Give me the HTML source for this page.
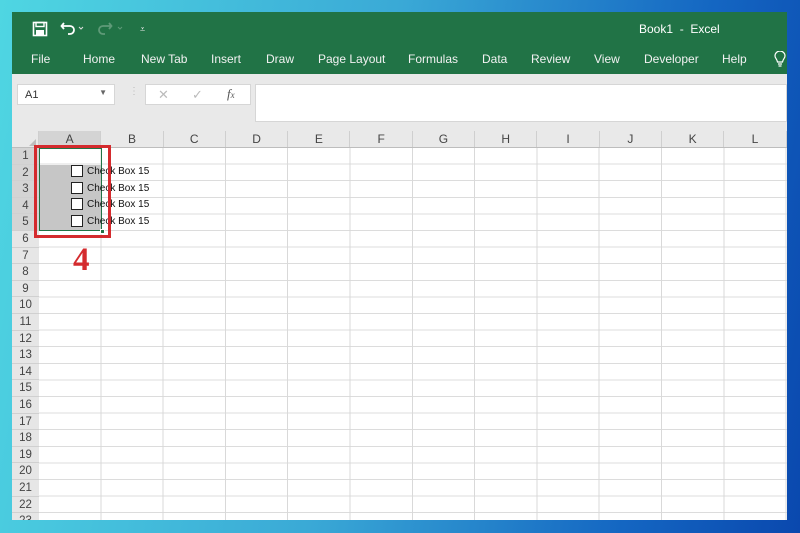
<!DOCTYPE html>
<html><head><meta charset="utf-8"><style>
*{margin:0;padding:0;box-sizing:border-box}
body{width:800px;height:533px;overflow:hidden;position:relative;background:linear-gradient(100deg,#4fd6e2 0%,#3aa9d6 45%,#1466c2 80%,#0a48ae 100%);font-family:"Liberation Sans",sans-serif}
.a{position:absolute}
.win{left:12px;top:12px;width:775px;height:508px;background:#e9e9e9;overflow:hidden}
.rib{left:0;top:0;width:775px;height:62px;background:#217346;color:#fff}
.tab{position:absolute;top:40px;font-size:12px;color:#f2f2f2}
.grid{left:27px;top:136px;width:748px;height:372px;background:#fff;
background-image:repeating-linear-gradient(to right,transparent 0 61.3px,#d9d9d9 61.3px 62.3px),repeating-linear-gradient(to bottom,transparent 0 15.6px,#dcdcdc 15.6px 16.6px)}
.ch{top:119px;height:17px;width:62.3px;font-size:12px;color:#444;text-align:center;line-height:17px;border-right:1px solid #cfcfcf;background:#e9e9e9}
.rh{left:0;width:27px;height:16.6px;font-size:11.5px;color:#444;text-align:center;line-height:17px;border-bottom:1px solid #d0d0d0;background:#e6e6e6}
.cb{width:12px;height:12px;border:1px solid #222;background:#fff}
.ct{font-size:10px;color:#111}
</style></head><body>
<div class="a win">
 <div class="a rib">
  <svg class="a" style="left:20px;top:9px" width="16" height="16" viewBox="0 0 16 16"><rect x="1.5" y="1.5" width="13" height="13" fill="none" stroke="#fff" stroke-width="1.6"/><rect x="4" y="1.5" width="8" height="4" fill="none" stroke="#fff" stroke-width="1.4"/><rect x="4" y="9" width="8" height="5.5" fill="#fff"/></svg>
  <svg class="a" style="left:48px;top:8px" width="30" height="16" viewBox="0 0 30 16"><path d="M4 3 L1.5 6 L4 9 M2 6 H10 a4 4 0 0 1 0 8 H8" fill="none" stroke="#fff" stroke-width="1.8"/><path d="M19 7 l2 2 l2 -2" fill="none" stroke="#ddd" stroke-width="1"/></svg>
  <svg class="a" style="left:86px;top:8px" width="30" height="16" viewBox="0 0 30 16"><path d="M11 3 L13.5 6 L11 9 M13 6 H5 a4 4 0 0 0 0 8 H7" fill="none" stroke="#5f9a78" stroke-width="1.8"/><path d="M20 7 l2 2 l2 -2" fill="none" stroke="#5f9a78" stroke-width="1"/></svg>
  <div class="a" style="left:128px;top:12px;font-size:9px;color:#eee">⩡</div>
  <div class="a" style="left:627px;top:10px;font-size:12px">Book1 &nbsp;- &nbsp;Excel</div>
  <div class="tab" style="left:19px">File</div>
  <div class="tab" style="left:71px">Home</div>
  <div class="tab" style="left:129px">New Tab</div>
  <div class="tab" style="left:199px">Insert</div>
  <div class="tab" style="left:254px">Draw</div>
  <div class="tab" style="left:306px">Page Layout</div>
  <div class="tab" style="left:396px">Formulas</div>
  <div class="tab" style="left:470px">Data</div>
  <div class="tab" style="left:519px">Review</div>
  <div class="tab" style="left:582px">View</div>
  <div class="tab" style="left:632px">Developer</div>
  <div class="tab" style="left:710px">Help</div>
  <svg class="a" style="left:762px;top:39px" width="12" height="17" viewBox="0 0 12 17"><path d="M3.5 11 C3 8 1 7 1 5 a5 5 0 0 1 10 0 c0 2 -2 3 -2.5 6 Z M4 13 h4 M4.5 15 h3" fill="none" stroke="#fff" stroke-width="1.2"/></svg>
 </div>
 <div class="a" style="left:5px;top:72px;width:98px;height:21px;background:#fff;border:1px solid #d6d6d6;font-size:11px;color:#333;padding:4px 0 0 7px">A1<span style="position:absolute;right:7px;top:3px;font-size:8px;color:#666">▼</span></div>
 <div class="a" style="left:117px;top:74px;color:#bbb;font-size:10px">⋮</div>
 <div class="a" style="left:133px;top:72px;width:106px;height:21px;background:#fff;border:1px solid #d6d6d6;font-size:13px;color:#bbb">
  <span class="a" style="left:12px;top:2px">✕</span><span class="a" style="left:46px;top:2px">✓</span><span class="a" style="left:81px;top:1px;color:#555;font-family:'Liberation Serif',serif;font-style:italic;font-size:13px">f<span style="font-size:9px">x</span></span></div>
 <div class="a" style="left:243px;top:72px;width:532px;height:38px;background:#fff;border:1px solid #d6d6d6"></div>
 <!-- headers -->
 <div class="a" style="left:0;top:119px;width:27px;height:17px;background:#e9e9e9;border-right:1px solid #cfcfcf"><div class="a" style="right:2px;bottom:2px;width:0;height:0;border-left:7px solid transparent;border-bottom:7px solid #bdbdbd"></div></div>
 <div class="a ch" style="left:27px;background:#d4d4d4">A</div>
 <div class="a ch" style="left:89.3px">B</div>
 <div class="a ch" style="left:151.6px">C</div>
 <div class="a ch" style="left:213.9px">D</div>
 <div class="a ch" style="left:276.2px">E</div>
 <div class="a ch" style="left:338.5px">F</div>
 <div class="a ch" style="left:400.8px">G</div>
 <div class="a ch" style="left:463.1px">H</div>
 <div class="a ch" style="left:525.4px">I</div>
 <div class="a ch" style="left:587.7px">J</div>
 <div class="a ch" style="left:650px">K</div>
 <div class="a ch" style="left:712.3px">L</div>
 <div class="a" style="left:0;top:135px;width:775px;height:1px;background:#bdbdbd"></div>
 <div class="a grid"></div>
 <div class="a" style="left:0;top:136px;width:27px;height:372px;background:#e6e6e6;border-right:1px solid #cfcfcf">
  <div class="a rh" style="top:0;background:#d4d4d4">1</div>
  <div class="a rh" style="top:16.6px;background:#d4d4d4">2</div>
  <div class="a rh" style="top:33.2px;background:#d4d4d4">3</div>
  <div class="a rh" style="top:49.8px;background:#d4d4d4">4</div>
  <div class="a rh" style="top:66.4px;background:#d4d4d4">5</div>
  <div class="a rh" style="top:83px">6</div>
  <div class="a rh" style="top:99.6px">7</div>
  <div class="a rh" style="top:116.2px">8</div>
  <div class="a rh" style="top:132.8px">9</div>
  <div class="a rh" style="top:149.4px">10</div>
  <div class="a rh" style="top:166px">11</div>
  <div class="a rh" style="top:182.6px">12</div>
  <div class="a rh" style="top:199.2px">13</div>
  <div class="a rh" style="top:215.8px">14</div>
  <div class="a rh" style="top:232.4px">15</div>
  <div class="a rh" style="top:249px">16</div>
  <div class="a rh" style="top:265.6px">17</div>
  <div class="a rh" style="top:282.2px">18</div>
  <div class="a rh" style="top:298.8px">19</div>
  <div class="a rh" style="top:315.4px">20</div>
  <div class="a rh" style="top:332px">21</div>
  <div class="a rh" style="top:348.6px">22</div>
  <div class="a rh" style="top:365.2px">23</div>
 </div>
 <!-- selection -->
 <div class="a" style="left:27px;top:152.6px;width:62px;height:66px;background:#c6c6c6"></div>
 <div class="a" style="left:27px;top:136px;width:63px;height:83px;border:1.5px solid #217346"></div>
 <div class="a" style="left:87.5px;top:216.5px;width:5px;height:5px;background:#217346;border:1px solid #fff"></div>
 <div class="a cb" style="left:59px;top:153px"></div><div class="a ct" style="left:75px;top:154px">Check Box 15</div>
 <div class="a cb" style="left:59px;top:169.6px"></div><div class="a ct" style="left:75px;top:170.6px">Check Box 15</div>
 <div class="a cb" style="left:59px;top:186.2px"></div><div class="a ct" style="left:75px;top:187.2px">Check Box 15</div>
 <div class="a cb" style="left:59px;top:202.8px"></div><div class="a ct" style="left:75px;top:203.8px">Check Box 15</div>
 <div class="a" style="left:22px;top:133px;width:77px;height:93px;border:3px solid #d42b2e"></div>
 <div class="a" style="left:61px;top:230px;font-family:'Liberation Serif',serif;font-weight:bold;font-size:33px;color:#d42b2e">4</div>
</div>
</body></html>
